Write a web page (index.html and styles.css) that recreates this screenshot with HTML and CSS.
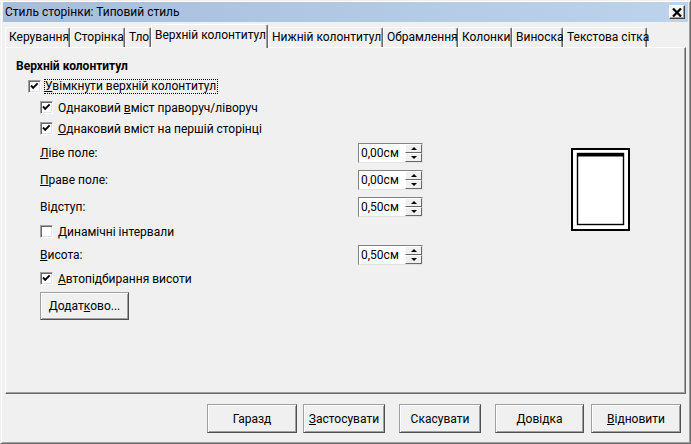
FILE: index.html
```html
<!DOCTYPE html>
<html>
<head>
<meta charset="utf-8">
<link rel="stylesheet" href="styles.css">
</head>
<body>
<div class="window">
  <div class="titlebar">
    <span class="title">Стиль сторінки: Типовий стиль</span>
    <span class="close"><svg width="10" height="9" viewBox="0 0 10 9"><path d="M1 0.5 L9 8.5 M9 0.5 L1 8.5" stroke="#000" stroke-width="2.2"/></svg></span>
  </div>
  <div class="tabs">
    <div class="tab t1">Керування</div>
    <div class="tab t2">Сторінка</div>
    <div class="tab t3">Тло</div>
    <div class="tab sel t4">Верхній колонтитул</div>
    <div class="tab t5">Нижній колонтитул</div>
    <div class="tab t6">Обрамлення</div>
    <div class="tab t7">Колонки</div>
    <div class="tab t8">Виноска</div>
    <div class="tab t9">Текстова сітка</div>
  </div>
  <div class="panel">
    <div class="form">
      <div class="row head">Верхній колонтитул</div>
      <div class="row cb l1"><span class="box"><svg width="11" height="11" viewBox="0 0 11 11"><path d="M2 4.5 L4.2 6.8 L8.6 2.3" fill="none" stroke="#000" stroke-width="1.9"/></svg></span><span class="focus"><u>У</u>вімкнути верхній колонтитул</span></div>
      <div class="row cb l2"><span class="box"><svg width="11" height="11" viewBox="0 0 11 11"><path d="M2 4.5 L4.2 6.8 L8.6 2.3" fill="none" stroke="#000" stroke-width="1.9"/></svg></span><span class="lab">Однаковий <u>в</u>міст праворуч/ліворуч</span></div>
      <div class="row cb l2"><span class="box"><svg width="11" height="11" viewBox="0 0 11 11"><path d="M2 4.5 L4.2 6.8 L8.6 2.3" fill="none" stroke="#000" stroke-width="1.9"/></svg></span><span class="lab"><u>О</u>днаковий вміст на першій сторінці</span></div>
      <div class="row field r27"><span class="lbl"><u>Л</u>іве поле:</span><span class="spin"><span class="val">0,00см</span><span class="arrows"><span class="arrow"><i class="up"></i></span><span class="arrow"><i class="down"></i></span></span></span></div>
      <div class="row field r27"><span class="lbl"><u>П</u>раве поле:</span><span class="spin"><span class="val">0,00см</span><span class="arrows"><span class="arrow"><i class="up"></i></span><span class="arrow"><i class="down"></i></span></span></span></div>
      <div class="row field r27"><span class="lbl">Ві<u>д</u>ступ:</span><span class="spin"><span class="val">0,50см</span><span class="arrows"><span class="arrow"><i class="up"></i></span><span class="arrow"><i class="down"></i></span></span></span></div>
      <div class="row cb l2 r23"><span class="box"></span><span class="lab"><u>Д</u>инамічні інтервали</span></div>
      <div class="row field r23"><span class="lbl"><u>В</u>исота:</span><span class="spin"><span class="val">0,50см</span><span class="arrows"><span class="arrow"><i class="up"></i></span><span class="arrow"><i class="down"></i></span></span></span></div>
      <div class="row cb l2 r25"><span class="box"><svg width="11" height="11" viewBox="0 0 11 11"><path d="M2 4.5 L4.2 6.8 L8.6 2.3" fill="none" stroke="#000" stroke-width="1.9"/></svg></span><span class="lab"><u>А</u>втопідбирання висоти</span></div>
      <div class="morerow"><span class="btn more">Додат<u>к</u>ово...</span></div>
    </div>
    <div class="preview">
      <svg width="60" height="84" viewBox="0 0 60 84">
        <rect x="1" y="1" width="57" height="81" fill="#fff" stroke="#000" stroke-width="2"/>
        <rect x="6.5" y="5.5" width="46" height="71" fill="#fff" stroke="#000" stroke-width="1.4"/>
        <rect x="6" y="5" width="47" height="3.5" fill="#000"/>
      </svg>
    </div>
  </div>
  <div class="buttons">
    <span class="btn b1">Гаразд</span>
    <span class="btn b2"><u>З</u>астосувати</span>
    <span class="btn b3">Скасувати</span>
    <span class="btn b4"><u>Д</u>овідка</span>
    <span class="btn b5"><u>В</u>ідновити</span>
  </div>
</div>
</body>
</html>
```
FILE: styles.css
```css
* { box-sizing: border-box; }
body {
  margin: 0;
  background: #f0f0f0;
  font-family: Roboto, "Noto Sans", sans-serif;
  font-size: 12px;
  color: #000;
}
u { text-decoration: underline; text-underline-offset: 1px; }
.window {
  width: 691px;
  height: 444px;
  border: 1px solid;
  border-color: #f0f0f0 #696969 #696969 #f0f0f0;
  box-shadow: inset 1px 1px #fff, inset -1px -1px #a0a0a0;
  padding: 1px 2px 0 2px;
  display: flex;
  flex-direction: column;
}
.titlebar {
  height: 20px;
  flex: none;
  background: linear-gradient(to right, #a6bedb, #bdd3ec);
  display: flex;
  align-items: center;
  justify-content: space-between;
}
.title { padding-left: 2px; line-height: 20px; }
.close {
  width: 16px;
  height: 14px;
  margin-right: 3px;
  background: #f4f4f4;
  border: 1px solid;
  border-color: #fff #404040 #404040 #fff;
  box-shadow: inset -1px -1px #a0a0a0;
  display: flex;
  align-items: center;
  justify-content: center;
}
.tabs {
  margin: 2px 2px 0 2px;
  height: 23px;
  flex: none;
  display: flex;
  align-items: flex-end;
}
.tab {
  height: 20px;
  border-top: 1px solid #fff;
  border-left: 1px solid #fff;
  border-right: 1px solid #696969;
  box-shadow: inset -1px 0 #a0a0a0;
  border-radius: 2px 2px 0 0;
  padding-left: 3px;
  line-height: 18px;
  white-space: nowrap;
  flex: none;
}
.tab.sel {
  height: 24px;
  margin-bottom: -1px;
  padding-top: 1px;
  background: #f0f0f0;
  position: relative;
  z-index: 1;
}
.t1 { width: 65px; }
.t2 { width: 55px; }
.t3 { width: 26px; }
.t4 { width: 117px; }
.t5 { width: 115px; }
.t6 { width: 75px; }
.t7 { width: 54px; }
.t8 { width: 51px; }
.t9 { width: 84px; }
.panel {
  margin: 0 2px;
  height: 347px;
  flex: none;
  border: 1px solid;
  border-color: #fff #696969 #696969 #fff;
  box-shadow: inset -1px -1px #a0a0a0;
  padding: 7px 0 0 10px;
  display: flex;
  align-items: flex-start;
}
.form { width: 408px; display: flex; flex-direction: column; }
.row { display: flex; align-items: center; height: 21px; white-space: nowrap; }
.head { font-weight: bold; }
.l1 { padding-left: 12px; }
.l2 { padding-left: 24px; }
.field { padding-left: 24px; }
.r27 { height: 27px; }
.r23 { height: 23px; }
.r25 { height: 25px; }
.box {
  width: 13px;
  height: 13px;
  flex: none;
  background: #fff;
  border: 1px solid;
  border-color: #a0a0a0 #fff #fff #a0a0a0;
  box-shadow: inset 1px 1px #696969, inset -1px -1px #e3e3e3;
  display: flex;
}
.focus {
  margin-left: 3px;
  border: 1px dotted #000;
  padding: 0 1px 0 0;
  line-height: 13px;
}
.lab { margin-left: 5px; }
.lbl { width: 318px; flex: none; }
.spin {
  width: 65px;
  height: 20px;
  display: flex;
  background: #fff;
  border: 1px solid;
  border-color: #828282 #e3e3e3 #e3e3e3 #828282;
}
.val { flex: 1; padding-left: 2px; line-height: 18px; }
.arrows { width: 17px; display: flex; flex-direction: column; }
.arrow {
  flex: 1;
  background: #f0f0f0;
  border: 1px solid;
  border-color: #fff #696969 #696969 #fff;
  display: flex;
  align-items: center;
  justify-content: center;
}
.up, .down { width: 0; height: 0; border-left: 3px solid transparent; border-right: 3px solid transparent; }
.up { border-bottom: 3px solid #000; }
.down { border-top: 3px solid #000; }
.morerow { margin-top: 1px; padding-left: 24px; display: flex; }
.btn {
  height: 28px;
  background: #f0f0f0;
  border: 1px solid;
  border-color: #a0a0a0 #505050 #505050 #a0a0a0;
  box-shadow: inset 1px 1px #fff, inset -1px -1px #a0a0a0;
  display: flex;
  align-items: center;
  justify-content: center;
  white-space: nowrap;
  flex: none;
}
.more { width: 89px; }
.preview { margin-left: 147px; margin-top: 93px; display: flex; }
.buttons {
  margin-top: 10px;
  height: 29px;
  display: flex;
  justify-content: flex-end;
  padding-right: 7px;
}
.buttons .btn { height: 29px; }
.b1 { width: 90px; }
.b2 { width: 82px; margin-left: 6px; }
.b3 { width: 82px; margin-left: 14px; }
.b4 { width: 89px; margin-left: 14px; }
.b5 { width: 90px; margin-left: 7px; }
```
